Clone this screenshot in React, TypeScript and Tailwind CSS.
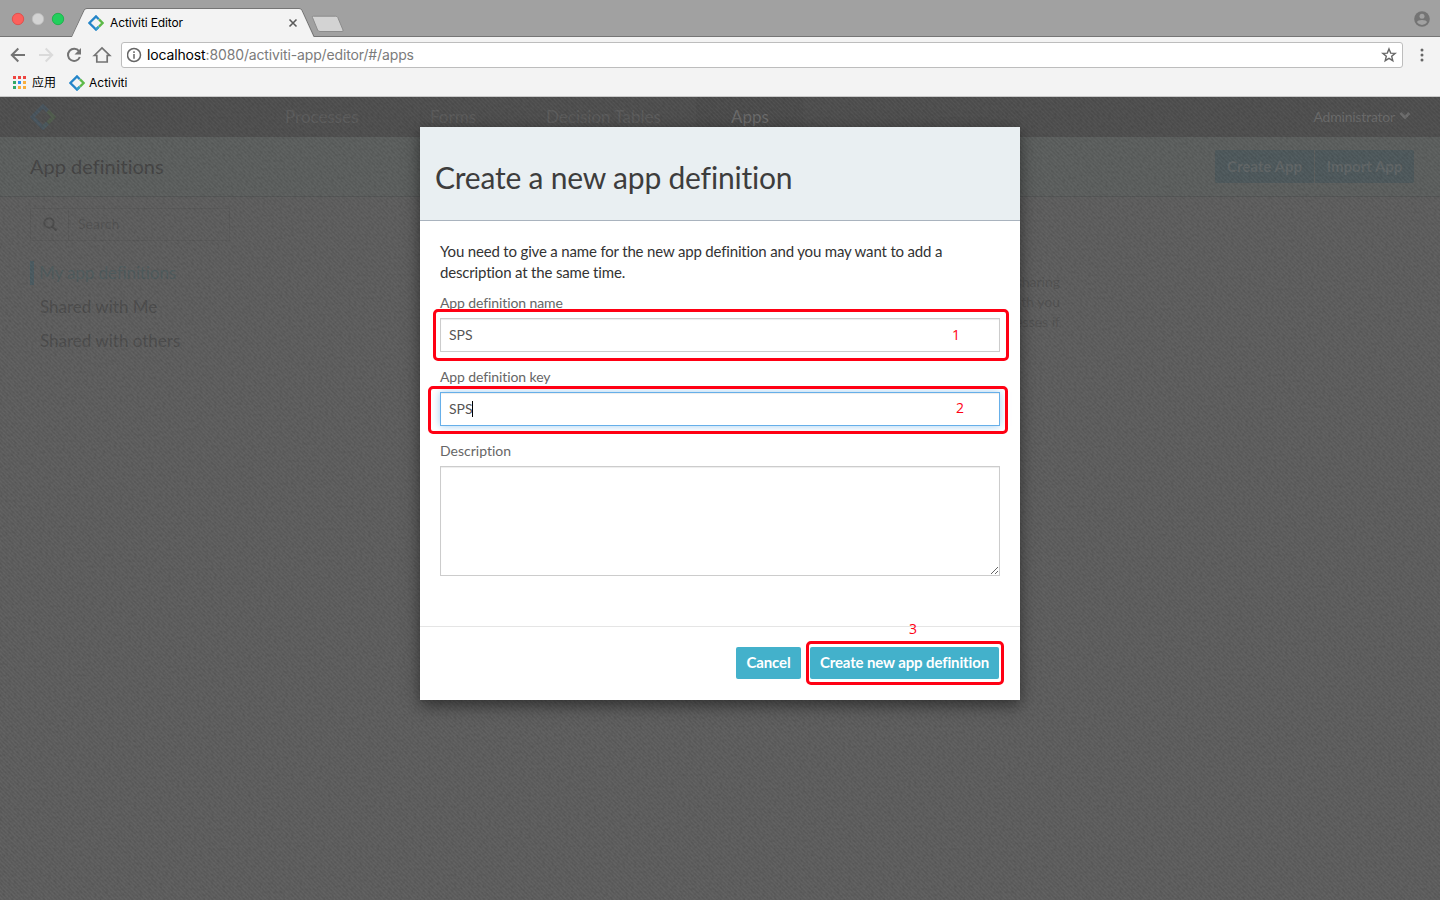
import React from "react";

function Diamond({ size, className = "" }: { size: number; className?: string }) {
  return (
    <svg width={size} height={size} viewBox="0 0 16 16" className={className} fill="none">
      <path d="M10.8 4.2 8 1.4 1.4 8 8 14.6l2.8-2.8" stroke="#2485c9" strokeWidth="2.3" />
      <path d="M10.6 11.9 8 14.4" stroke="#35a3c4" strokeWidth="2.3" />
      <path d="M11 4.4 14.6 8 11 11.6" stroke="#5cb947" strokeWidth="2.3" />
    </svg>
  );
}

function TabStrip() {
  return (
    <header className="relative h-[37px] w-full shrink-0 bg-[#a1a1a1]">
      <svg width="1440" height="37" className="absolute inset-0" fill="none">
        <path d="M0 36.5H72L84 10.5Q84.8 8.5 87 8.5H299Q301.2 8.5 302 10.5L314 36.5H1440" stroke="#757575" />
        <path d="M72 37 84.500 10.500Q85 9 87 9H299Q301 9 301.500 10.500L313.500 37Z" fill="#f3f3f3" />
        <path d="M312.5 17.500Q311.500 16.200 313.500 16.200H335.500Q337 16.200 337.800 17.500L343 30Q343.700 31.500 342 31.500H320Q318.300 31.500 317.600 30Z" fill="#d3d3d3" stroke="#8c8c8c" />
        <circle cx="18" cy="19" r="5.700" fill="#fc605c" stroke="#df4744" strokeWidth=".8" />
        <circle cx="38" cy="19" r="5.700" fill="#d3d3d3" stroke="#bdbdbd" strokeWidth=".8" />
        <circle cx="58" cy="19" r="5.700" fill="#22cf5d" stroke="#15ad43" strokeWidth=".8" />
        <path d="m289.500 19.500 7 7m0-7-7 7" stroke="#5a5a5a" strokeWidth="1.600" />
        <circle cx="1422" cy="19" r="7.800" fill="#747474" />
        <circle cx="1422" cy="16.200" r="2.500" fill="#a1a1a1" />
        <path d="M1417 22.200C1417 19.300 1427 19.300 1427 22.200Q1425 25 1422 25T1417 22.200" fill="#a1a1a1" />
      </svg>
      <div className="relative flex h-[37px] items-center pt-[9px] pl-[88px]">
        <Diamond size={16} />
        <span className="ml-[6px] text-[12px] leading-4 tracking-[-0.12px] text-black">Activiti Editor</span>
      </div>
    </header>
  );
}

function Toolbar() {
  return (
    <div className="flex h-[36px] shrink-0 items-center bg-[#f3f3f3]">
      <svg width="121" height="36" fill="none" stroke="#737373" strokeWidth="2">
        <path d="M25 18H12m6.300-6.500L11.800 18l6.500 6.500" />
        <path d="M39 18h13m-6.300-6.500L52.200 18l-6.500 6.500" stroke="#dadada" />
        <path d="M79 14.200A6.100 6.100 0 1 0 79.800 20" />
        <path d="M81 11v6.500h-6.500Z" fill="#737373" stroke="none" />
        <path d="M94.300 18.500 102 11l7.700 7.500h-2.500V25H96.800v-6.500Z" strokeWidth="1.700" />
      </svg>
      <div className="flex h-[26px] w-[1282px] items-center rounded-[3px] border border-[#bdbdbd] bg-white pr-[5px] pl-[5px]">
        <svg width="16" height="16" fill="none" stroke="#666" strokeWidth="1.500">
          <circle cx="7" cy="8" r="6.500" />
          <path d="M7 7v4.700M7 4.200V6" />
        </svg>
        <span className="ml-[4px] text-[14px] leading-5 tracking-[-0.14px] text-[#7b7b7b]">
          <span className="text-black">localhost</span>:8080/activiti-app/editor/#/apps
        </span>
        <svg width="16" height="16" className="ml-auto" fill="none" stroke="#666" strokeWidth="1.400">
          <path d="m8 1.900 1.700 4.200 4.500.3-3.500 2.900 1.100 4.400L8 11.300l-3.800 2.400 1.100-4.400-3.500-2.900 4.500-.3Z" />
        </svg>
      </div>
      <svg width="37" height="36" fill="#666">
        <circle cx="19" cy="13" r="1.500" />
        <circle cx="19" cy="18" r="1.500" />
        <circle cx="19" cy="23" r="1.500" />
      </svg>
    </div>
  );
}

const dots = ["#ee4540", "#ee4540", "#ee4540", "#32a866", "#2c8ef0", "#f9ae3b", "#32a866", "#f9ae3b", "#f9ae3b"];

function Bookmarks() {
  return (
    <div className="flex h-[24px] shrink-0 items-center border-b border-[#c9c9c9] bg-[#f3f3f3] pb-[4px] pl-[13px] text-[12px] leading-4 text-black">
      <svg width="13" height="13">
        {dots.map((c, i) => (
          <rect key={i} x={(i % 3) * 5} y={Math.floor(i / 3) * 5} width="3" height="3" fill={c} />
        ))}
      </svg>
      <span className="ml-[6px] w-[24px]">应用</span>
      <Diamond size={16} className="ml-[13px]" />
      <span className="ml-[4px]">Activiti</span>
    </div>
  );
}

function Page() {
  return (
    <div className="h-full font-[Lato,sans-serif] [font-variant-ligatures:none]">
      <nav className="flex h-[40px] items-center bg-[#505050] text-[17px] text-[#5d5d5d]">
        <Diamond size={26} className="ml-[30px] opacity-12" />
        <span className="ml-[229px] w-[145px]">Processes</span>
        <span className="w-[116px]">Forms</span>
        <span className="w-[150px]">Decision Tables</span>
        <span className="flex h-full w-[107px] items-center bg-[#4d4d4d] pl-[35px] text-[#6c6c6c]">Apps</span>
        <span className="ml-auto pb-[2px] text-[14px] tracking-[-0.2px] text-[#6a6a6a]">Administrator</span>
        <svg width="12" height="10" className="mr-[29px] ml-[4px] mb-[2px]" fill="none" stroke="#6c6c6c" strokeWidth="3">
          <path d="m1.500 2 4.500 4.500L10.500 2" />
        </svg>
      </nav>
      <section className="flex h-[60px] items-center border-b border-[#545656] bg-[#5d605f] pr-[26px] pl-[30px]">
        <h1 className="pb-[2px] text-[20px] text-[#464646]">App definitions</h1>
        <div className="ml-auto flex gap-px text-[15px] font-bold text-[#616667]">
          <span className="flex h-[33px] w-[99px] items-center justify-center rounded-l-[2px] bg-[#4f5a5d]">Create App</span>
          <span className="flex h-[33px] w-[99px] items-center justify-center rounded-r-[2px] bg-[#4f5a5d]">Import App</span>
        </div>
      </section>
      <main className="flex justify-between">
        <aside className="pt-[11px] pl-[30px] text-[17px] text-[#4d4d4d]">
          <div className="flex h-[33px] w-[200px] items-center border border-[#5a5a5a] text-[14px] text-[#535353]">
            <span className="flex h-full w-[38px] items-center justify-center border-r border-[#5a5a5a]">
              <svg width="14" height="14" className="mb-[2px]" fill="none" stroke="#4e4e4e" strokeWidth="2">
                <circle cx="6" cy="6" r="4.700" />
                <path d="m9.500 9.500 4 4" />
              </svg>
            </span>
            <span className="pb-[2px] pl-[9px]">Search</span>
          </div>
          <div className="mt-[20px] flex h-[24px] items-center border-l-4 border-[#4c5c62] pl-[5px] tracking-[-0.1px] text-[#505c5e]">My app definitions</div>
          <div className="mt-[10px] h-[24px] pl-[10px] leading-6">Shared with Me</div>
          <div className="mt-[10px] h-[24px] pl-[10px] leading-6">Shared with others</div>
        </aside>
        <p className="mr-[380px] pt-[75px] text-right text-[14px] leading-5 text-[#535353]">
          sharing<br />with you<br />processes if
        </p>
      </main>
    </div>
  );
}

function Dialog() {
  return (
    <div className="relative flex h-[573px] w-[600px] flex-col bg-white font-[Lato,sans-serif] shadow-[0_5px_15px_rgba(0,0,0,0.5)] [font-variant-ligatures:none]">
      <div className="h-[94px] shrink-0 border-b border-[#a9b3be] bg-[#e9eff2] px-[15px] pt-[29px]">
        <h2 className="text-[30px] leading-[42px] tracking-[-0.2px] text-[#3d3d3d]">Create a new app definition</h2>
      </div>
      <div className="h-[405px] px-5 pt-5 text-[15px] leading-[21px] text-[#333]">
        <p className="tracking-[-0.17px]">
          You need to give a name for the new app definition and you may want to add a<br />description at the same time.
        </p>
        <div className="mt-[10px] text-[14px] leading-[20px] text-[#666]">
          <div className="h-[25px] tracking-[-0.1px]">App definition name</div>
          <div className="flex h-[34px] items-center border border-[#ccc] pl-2 text-[#555] shadow-[inset_0_1px_1px_rgba(0,0,0,0.075)]">SPS</div>
          <div className="mt-[15px] h-[25px] tracking-[-0.1px]">App definition key</div>
          <div className="flex h-[34px] items-center border border-[#66afe9] pl-2 text-[#555] shadow-[inset_0_1px_1px_rgba(0,0,0,0.075),0_0_8px_rgba(102,175,233,0.6)]">
            SPS<span className="-ml-px h-[16px] w-px bg-black" />
          </div>
          <div className="mt-[15px] h-[25px]">Description</div>
          <div className="flex h-[110px] items-end justify-end border border-[#ccc] shadow-[inset_0_1px_1px_rgba(0,0,0,0.075)]">
            <svg width="9" height="9" stroke="#666" strokeWidth="1">
              <path d="m1 8 7-7M5 8l3-3" />
            </svg>
          </div>
        </div>
      </div>
      <div className="flex flex-1 items-start justify-end gap-[9px] border-t border-[#e5e5e5] pt-[20px] pr-[21px] text-[15px] font-bold tracking-[-0.13px] text-white">
        <span className="flex h-[32px] w-[65px] items-center justify-center rounded-[2px] bg-[#43b1cb] pb-[2px]">Cancel</span>
        <span className="flex h-[32px] w-[189px] items-center justify-center rounded-[2px] bg-[#43b1cb] pb-[2px]">Create new app definition</span>
      </div>
      <div className="absolute top-[182px] left-[13px] h-[52px] w-[576px] rounded-[5px] border-3 border-[#ff0013]" />
      <div className="absolute top-[259px] left-[8px] h-[48px] w-[580px] rounded-[5px] border-3 border-[#ff0013]" />
      <div className="absolute top-[514px] left-[386px] h-[44px] w-[198px] rounded-[5px] border-3 border-[#ff0013]" />
      <div className="font-['Open_Sans',sans-serif] text-[14px] leading-5 text-[#ff0013]">
        <span className="absolute top-[198px] left-[532px]">1</span>
        <span className="absolute top-[271px] left-[536px]">2</span>
        <span className="absolute top-[492px] left-[489px]">3</span>
      </div>
    </div>
  );
}

function Texture() {
  return (
    <svg className="absolute inset-0 h-full w-full">
      <defs>
        <pattern id="weave" width="4" height="4" patternUnits="userSpaceOnUse">
          <path d="M0 0h1v1H0zM1 1h1v1H1zM2 2h1v1H2zM3 3h1v1H3z" fill="#fff" fillOpacity=".03" />
          <path d="M2 0h1v1H2zM3 1h1v1H3zM0 2h1v1H0zM1 3h1v1H1z" fill="#000" fillOpacity=".04" />
        </pattern>
        <filter id="grain" x="0" y="0" width="100%" height="100%">
          <feTurbulence type="fractalNoise" baseFrequency="0.35" numOctaves="2" seed="4" />
          <feColorMatrix values="0 0 0 0 0  0 0 0 0 0  0 0 0 0 0  .16 0 0 0 -.06" />
        </filter>
      </defs>
      <rect width="100%" height="100%" fill="url(#weave)" />
      <rect width="100%" height="100%" filter="url(#grain)" />
    </svg>
  );
}

export default function App() {
  return (
    <div className="flex h-[900px] w-[1440px] flex-col overflow-hidden bg-[#f3f3f3] font-[Inter,'Noto_Sans_CJK_SC',sans-serif]">
      <TabStrip />
      <Toolbar />
      <Bookmarks />
      <div className="relative flex-1 bg-[#5f5f5f]">
        <Page />
        <Texture />
        <div className="absolute inset-0 flex items-start justify-center pt-[30px]">
          <Dialog />
        </div>
      </div>
    </div>
  );
}
